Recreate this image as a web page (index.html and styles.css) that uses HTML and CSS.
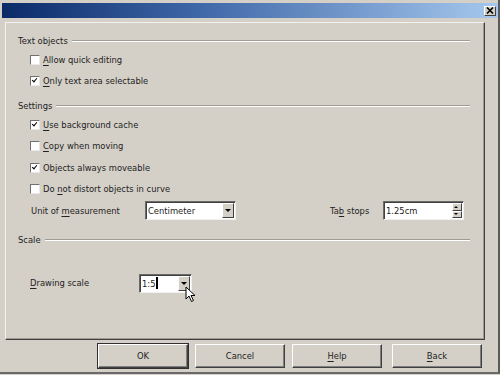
FILE: index.html
```html
<!DOCTYPE html>
<html lang="en">
<head>
    <meta charset="UTF-8">
    <title>Options</title>
    <link rel="stylesheet" href="styles.css">
</head>
<body>
<div class="window">
    <div class="titlebar">
        <span class="close">
            <svg width="8" height="7" viewBox="0 0 8 7"><path d="M1 0.5 L7 6.5 M7 0.5 L1 6.5" stroke="#000" stroke-width="1.6"/></svg>
        </span>
    </div>

    <div class="panel">
        <div class="heading"><span>Text objects</span><i class="rule"></i></div>
        <div class="row"><span class="box"></span><span><u>A</u>llow quick editing</span></div>
        <div class="row"><span class="box checked"></span><span><u>O</u>nly text area selectable</span></div>

        <div class="heading settings"><span>Settings</span><i class="rule"></i></div>
        <div class="row"><span class="box checked"></span><span><u>U</u>se background cache</span></div>
        <div class="row"><span class="box"></span><span><u>C</u>opy when moving</span></div>
        <div class="row"><span class="box checked"></span><span>Objects always moveable</span></div>
        <div class="row"><span class="box"></span><span>Do <u>n</u>ot distort objects in curve</span></div>
        <div class="row unit">
            <span class="label">Unit of <u>m</u>easurement</span>
            <span class="combo wide"><span class="value">Centimeter</span><span class="drop"></span></span>
            <span class="tablabel">Ta<u>b</u> stops</span>
            <span class="spin"><span class="value">1.25cm</span><span class="arrows"><span class="up"></span><span class="down"></span></span></span>
        </div>

        <div class="heading scale"><span>Scale</span><i class="rule"></i></div>
        <div class="row drawing">
            <span class="label"><u>D</u>rawing scale</span>
            <span class="combo narrow"><span class="value">1:5<b class="caret"></b></span><span class="drop"></span>
                <svg class="pointer" width="12" height="17" viewBox="0 0 12 17"><path d="M1 1 L1 13 L4 10 L6.5 15.5 L8.5 14.5 L6 9.5 L10 9.5 Z" fill="#fff" stroke="#000" stroke-width="1"/></svg>
            </span>
        </div>
    </div>

    <div class="buttons">
        <span class="btn default">OK</span>
        <span class="btn">Cancel</span>
        <span class="btn"><u>H</u>elp</span>
        <span class="btn back"><u>B</u>ack</span>
    </div>
</div>
</body>
</html>
```

FILE: styles.css
```css
* {
    box-sizing: border-box;
}
body {
    margin: 0;
    background: #d4d0c8;
    font-family: "DejaVu Sans", Verdana, sans-serif;
    font-size: 8.4px;
    color: #222;
}
u {
    text-decoration-thickness: 1px;
    text-underline-offset: 1.5px;
}
.window {
    width: 500px;
    height: 374px;
    padding: 3px 0 0 2px;
    border-right: 2px solid #5a5a5a;
    border-bottom: 2px solid #6a6a6a;
    position: relative;
}
.titlebar {
    height: 15px;
    width: 496px;
    background: linear-gradient(to right, #0b2a68 0%, #3f68a8 40%, #a6c8ee 100%);
    display: flex;
    justify-content: flex-end;
    align-items: center;
    padding-right: 2px;
}
.close {
    width: 12px;
    height: 10px;
    background: #d4d0c8;
    border: 1px solid;
    border-color: #fff #404040 #404040 #fff;
    display: flex;
    align-items: center;
    justify-content: center;
}
.panel {
    margin: 4px 0 0 3px;
    width: 480px;
    height: 318px;
    border: 1px solid;
    border-color: #f4f2ee #404040 #404040 #f4f2ee;
    box-shadow: inset -1px -1px 0 #a09c94;
    padding: 10px 14px 0 12px;
}
.heading {
    height: 16px;
    display: flex;
    align-items: center;
    gap: 4px;
}
.rule {
    flex: 1;
    height: 2px;
    border-top: 1px solid #a09c94;
    border-bottom: 1px solid #fff;
}
.settings {
    margin-top: 6px;
}
.scale {
    margin-top: 10px;
}
.row {
    height: 21.5px;
    display: flex;
    align-items: center;
    padding-left: 12px;
}
.box {
    width: 10px;
    height: 10px;
    background: #fff;
    border: 1px solid;
    border-color: #707070 #e8e8e8 #e8e8e8 #707070;
    margin-right: 3px;
    position: relative;
}
.checked::after {
    content: "";
    position: absolute;
    left: 1px;
    top: 1px;
    width: 4px;
    height: 2px;
    border-left: 1.5px solid #000;
    border-bottom: 1.5px solid #000;
    transform: rotate(-50deg);
}
.unit {
    padding-left: 13px;
}
.unit .label {
    width: 114px;
}
.combo, .spin {
    height: 19px;
    background: #fff;
    border: 1px solid;
    border-color: #6a6a6a #f0f0f0 #f0f0f0 #6a6a6a;
    box-shadow: inset 1px 1px 0 #404040;
    display: flex;
    align-items: center;
    position: relative;
}
.value {
    flex: 1;
    padding-left: 2px;
}
.wide {
    width: 91px;
}
.drop {
    width: 12px;
    height: 15px;
    margin-right: 1px;
    background: #d4d0c8;
    border: 1px solid;
    border-color: #fff #404040 #404040 #fff;
    position: relative;
}
.drop::after {
    content: "";
    position: absolute;
    left: 2px;
    top: 5px;
    border-left: 3px solid transparent;
    border-right: 3px solid transparent;
    border-top: 3px solid #000;
}
.tablabel {
    margin-left: 94px;
    width: 53px;
}
.spin {
    width: 81px;
}
.arrows {
    width: 10px;
    height: 15px;
    margin-right: 1px;
    display: flex;
    flex-direction: column;
}
.up, .down {
    flex: 1;
    background: #d4d0c8;
    border: 1px solid;
    border-color: #fff #404040 #404040 #fff;
    position: relative;
}
.up::after, .down::after {
    content: "";
    position: absolute;
    left: 1px;
    top: 2px;
    border-left: 2.5px solid transparent;
    border-right: 2.5px solid transparent;
}
.up::after {
    border-bottom: 2.5px solid #000;
}
.down::after {
    top: 1px;
    border-top: 2.5px solid #000;
}
.scale + .drawing {
    margin-top: 25px;
}
.drawing .label {
    width: 109px;
}
.narrow {
    width: 53px;
}
.caret {
    display: inline-block;
    width: 2px;
    height: 12px;
    background: #000;
    vertical-align: -2px;
    margin-left: 1px;
}
.pointer {
    position: absolute;
    left: 45px;
    top: 11px;
}
.buttons {
    display: flex;
    padding: 4px 0 0 96px;
    gap: 7px;
}
.btn {
    width: 90px;
    height: 24px;
    display: flex;
    align-items: center;
    justify-content: center;
    border: 1px solid;
    border-color: #fff #404040 #404040 #fff;
    box-shadow: inset -1px -1px 0 #808080;
}
.default {
    outline: 1px solid #303030;
}
.back {
    margin-left: 3px;
}
```
